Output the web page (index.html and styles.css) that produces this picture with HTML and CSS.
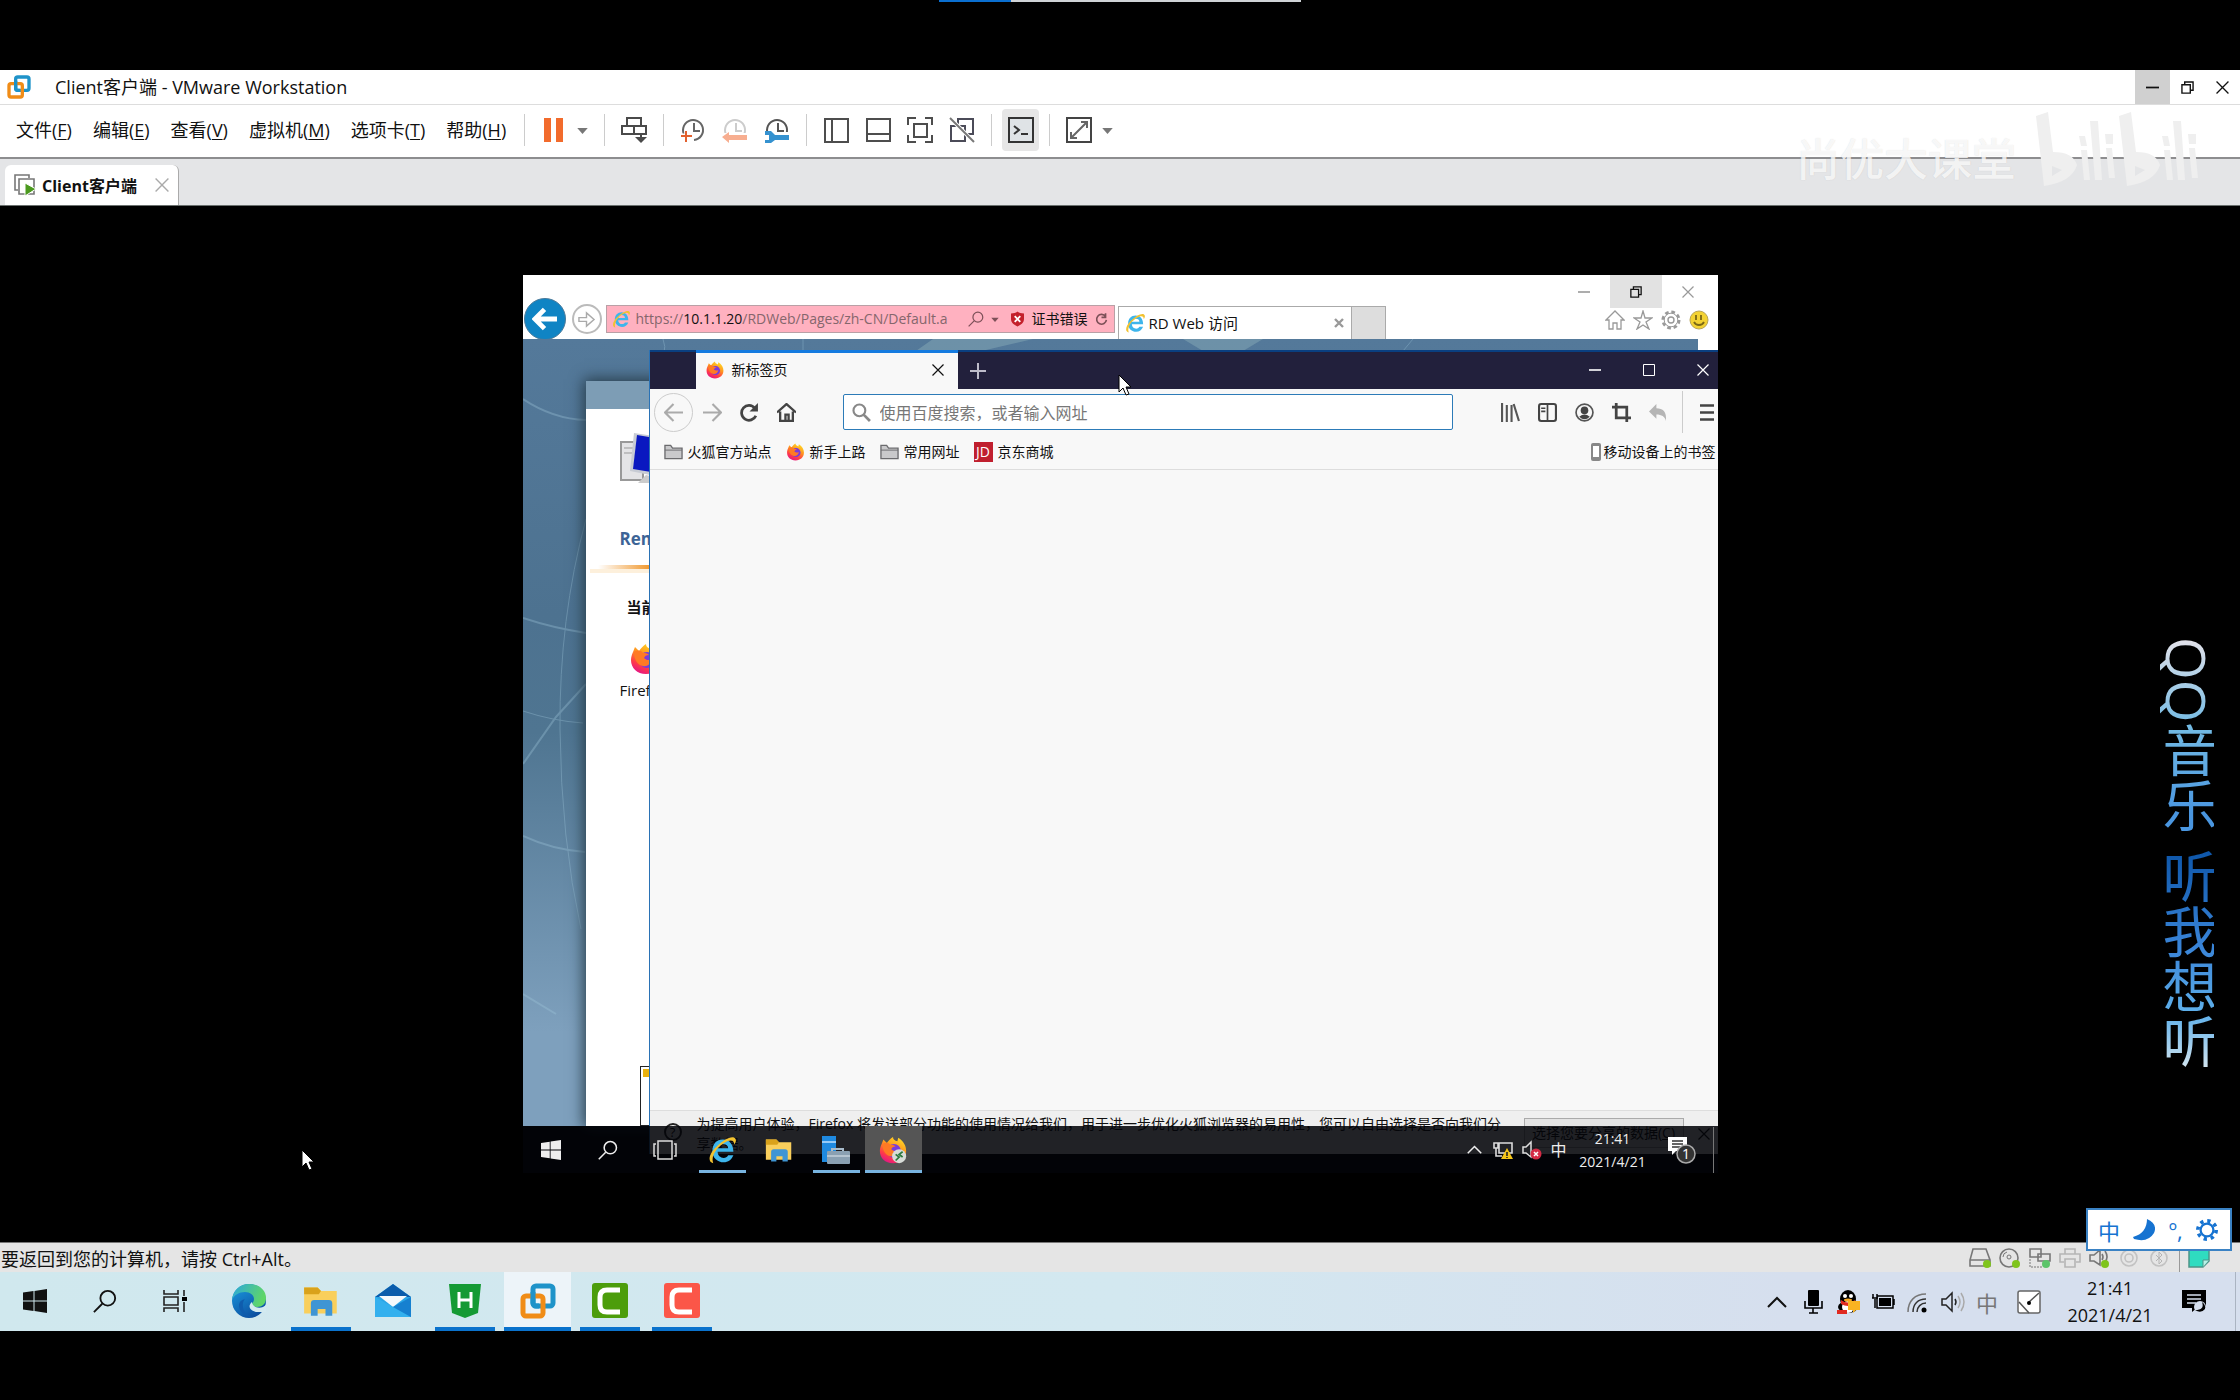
FILE: index.html
```html
<!DOCTYPE html>
<html lang="zh-CN">
<head>
    <meta charset="UTF-8">
    <meta name="viewport" content="width=device-width, initial-scale=1.0">
    <title>Client客户端 - VMware Workstation</title>
    <link rel="stylesheet" href="styles.css">
</head>
<body>
    <!-- shared icons -->
    <svg class="sprite" aria-hidden="true">
        <defs>
            <linearGradient id="foxFlame" x1="0.8" y1="0" x2="0.3" y2="1">
                <stop offset="0" stop-color="#ffe226"/>
                <stop offset="0.4" stop-color="#ff9a1f"/>
                <stop offset="0.75" stop-color="#ff3b47"/>
                <stop offset="1" stop-color="#e31587"/>
            </linearGradient>
            <linearGradient id="edgeBlue" x1="0" y1="0" x2="0.6" y2="1">
                <stop offset="0" stop-color="#1b9de2"/>
                <stop offset="1" stop-color="#0c4fa0"/>
            </linearGradient>
            <linearGradient id="edgeGreen" x1="0" y1="0" x2="1" y2="0.3">
                <stop offset="0" stop-color="#2aa7df"/>
                <stop offset="1" stop-color="#5fd668"/>
            </linearGradient>
        </defs>
        <symbol id="firefox" viewBox="0 0 32 32">
            <path d="M3 9 5 4l4 4c2-3 4-5 7-7 0 3 2 4 5 5l1-4c6 4 9 9 9 15 0 8-6 14-15 14S1 25 1 17c0-3 1-6 2-8z" fill="url(#foxFlame)"/>
            <circle cx="17" cy="17" r="8" fill="#7a3bdc"/>
            <path d="M4 9c3-2 7-2 9 1 2 0 4 0 6 2-3 0-4 1-5 3 2 2 5 3 8 1-1 5-5 8-9 7-6-1-9-7-9-14z" fill="#ff7a24"/>
        </symbol>
        <symbol id="ie" viewBox="0 0 32 32">
            <path d="M29 18H11c0 4 3 7 7 7 2 0 4-1 5-3h6c-2 5-6 8-11 8C11 30 5 25 5 17S10 4 17 4s12 5 12 14zM11 14h12c0-3-2-5-6-5-3 0-6 2-6 5z" fill="#3db5ec" fill-rule="evenodd"/>
            <path d="M6 31c-7-1-5-11 4-19C17 5 26 0 30 2c3 2 2 5 0 8 0-3-1-5-4-5-4 0-10 4-15 9-5 6-7 12-5 17z" fill="#f2c230"/>
        </symbol>
        <symbol id="folder" viewBox="0 0 20 18">
            <path d="M1 16V2h6l2 3h10v11z" fill="#c9c9cb" stroke="#6b6b6e" stroke-width="1.4"/>
            <path d="M1 7h18" stroke="#6b6b6e"/>
        </symbol>
        <symbol id="explorer" viewBox="0 0 32 32">
            <path d="M1 4h12l3 3h14v20H1z" fill="#f9cf5c"/>
            <path d="M1 4h12l3 3-2 3H1z" fill="#d9a21b"/>
            <path d="M7 29V18a3 3 0 0 1 3-3h13a3 3 0 0 1 3 3v11h-6v-6h-7v6z" fill="#3f95d4"/>
        </symbol>
        <symbol id="winlogo" viewBox="0 0 24 24">
            <path d="M0 3.5 10.5 2v9.5H0zM11.5 1.9 24 0v11.5H11.5zM0 12.5h10.5V22L0 20.5zM11.5 12.5H24V24l-12.5-1.9z" fill="currentColor"/>
        </symbol>
        <symbol id="vmware" viewBox="0 0 36 36">
            <rect x="13" y="3" width="20" height="20" rx="3" fill="none" stroke="#1f93c9" stroke-width="5"/>
            <rect x="3" y="13" width="20" height="20" rx="3" fill="none" stroke="#f08c17" stroke-width="5"/>
            <path d="M13 9v11a3 3 0 0 0 3 3h3" fill="none" stroke="#1f93c9" stroke-width="5"/>
        </symbol>
        <symbol id="search" viewBox="0 0 26 26">
            <circle cx="16" cy="10" r="8" fill="none" stroke="currentColor" stroke-width="2"/>
            <path d="M10 16 1 25" stroke="currentColor" stroke-width="2"/>
        </symbol>
        <symbol id="close" viewBox="0 0 12 12">
            <path d="m.5.5 11 11m0-11-11 11" stroke="currentColor" stroke-width="1.2"/>
        </symbol>
        <symbol id="minus" viewBox="0 0 12 12">
            <path d="M0 6h12" stroke="currentColor" stroke-width="1.6"/>
        </symbol>
        <symbol id="restore" viewBox="0 0 14 14">
            <path d="M1 4h9v9H1zM4 4V1h9v9h-3" fill="none" stroke="currentColor" stroke-width="1.5"/>
        </symbol>
        <symbol id="clock" viewBox="0 0 26 26">
            <path d="M5 19a10 10 0 1 1 9 4M14 6v8h6" fill="none" stroke="currentColor" stroke-width="2"/>
        </symbol>
        <symbol id="caret" viewBox="0 0 12 8">
            <path d="M0 1h12L6 8z" fill="currentColor"/>
        </symbol>
        <symbol id="chevron" viewBox="0 0 20 12">
            <path d="m1 11 9-9 9 9" fill="none" stroke="currentColor" stroke-width="2"/>
        </symbol>
        <symbol id="pointer" viewBox="0 0 14 22">
            <path d="M1 1v17l4-4 3 7 3-1-3-7h5z" fill="#fff" stroke="#000"/>
        </symbol>
    </svg>

    <div class="letterbox top"><div class="player-progress"><span class="played"></span></div></div>

    <div class="workstation">
        <header class="titlebar">
            <svg class="logo"><use href="#vmware"/></svg>
            <h1>Client客户端 - VMware Workstation</h1>
            <div class="window-controls">
                <button class="hovered" aria-label="最小化"><svg class="ctl"><use href="#minus"/></svg></button>
                <button aria-label="还原"><svg class="ctl"><use href="#restore"/></svg></button>
                <button aria-label="关闭"><svg class="ctl"><use href="#close"/></svg></button>
            </div>
        </header>

        <nav class="toolbar">
            <div class="menu">
                <button>文件(<u>F</u>)</button>
                <button>编辑(<u>E</u>)</button>
                <button>查看(<u>V</u>)</button>
                <button>虚拟机(<u>M</u>)</button>
                <button>选项卡(<u>T</u>)</button>
                <button>帮助(<u>H</u>)</button>
            </div>
            <div class="tools with-caret">
                <button aria-label="挂起"><svg viewBox="0 0 26 26"><path d="M3 1h7v24H3zM15 1h7v24h-7z" fill="#f26b2c"/></svg></button>
                <button class="drop" aria-label="电源选项"><svg><use href="#caret"/></svg></button>
            </div>
            <div class="tools">
                <button aria-label="发送按键"><svg viewBox="0 0 26 26"><path d="M6 1h14v8H6zM1 9h12v8H1zM13 9h12v8H13zM20 17v6" fill="none" stroke="#4a4a4a" stroke-width="2"/><path d="M14 20h12l-6 6z" fill="#4a4a4a"/></svg></button>
            </div>
            <div class="tools">
                <button aria-label="拍摄快照"><svg viewBox="0 0 26 26" color="#666"><use href="#clock"/><path d="M1 19h12M7 13v12" stroke="#fff" stroke-width="5"/><path d="M1 19h11M6 14v11" stroke="#e2612f" stroke-width="2"/></svg></button>
                <button aria-label="恢复快照"><svg viewBox="0 0 26 26" color="#ccc"><use href="#clock"/><path d="M0 16h26v10H0z" fill="#fff"/><path d="M0 20l7-5v3h18v5H7v3z" fill="#f7ae90"/></svg></button>
                <button aria-label="管理快照"><svg viewBox="0 0 26 26" color="#555"><use href="#clock"/><path d="M0 15h26v11H0z" fill="#fff"/><path d="M1 14h6l4 4h14v5H11l-4 3H1v-3h4v-5H1z" fill="#3592d0"/></svg></button>
            </div>
            <div class="tools">
                <button aria-label="库"><svg viewBox="0 0 26 26"><path d="M2 2h23v23H2zM9 2v23" fill="none" stroke="#4d4d4d" stroke-width="2"/></svg></button>
                <button aria-label="缩略图"><svg viewBox="0 0 26 26"><path d="M2 2h23v22H2zM2 17h23" fill="none" stroke="#4d4d4d" stroke-width="2"/></svg></button>
                <button aria-label="全屏"><svg viewBox="0 0 26 26"><path d="M1 8V1h8M18 1h7v7M25 18v7h-7M9 25H1v-7M7 7h13v13H7z" fill="none" stroke="#4d4d4d" stroke-width="2"/></svg></button>
                <button aria-label="Unity"><svg viewBox="0 0 26 26"><path d="M9 9V2h15v15h-7M2 9h14v15H2z" fill="none" stroke="#4b4b58" stroke-width="2"/><path d="m1 1 24 24" stroke="#fff" stroke-width="4"/><path d="m1 1 24 24" stroke="#777" stroke-width="2"/></svg></button>
            </div>
            <div class="tools console">
                <button class="pressed" aria-label="控制台视图"><svg viewBox="0 0 26 26"><path d="M1 1h24v24H1z" fill="#dfe3e6" stroke="#333" stroke-width="2"/><path d="m6 9 5 4-5 4M13 17h7" fill="none" stroke="#333" stroke-width="2"/></svg></button>
            </div>
            <div class="tools with-caret">
                <button aria-label="自由拉伸"><svg viewBox="0 0 26 26"><path d="M1 1h24v24H1z" fill="none" stroke="#444" stroke-width="2"/><path d="m6 20 14-14M15 5h6v6M5 15v6h6" fill="none" stroke="#666" stroke-width="2"/></svg></button>
                <button class="drop" aria-label="拉伸选项"><svg><use href="#caret"/></svg></button>
            </div>
        </nav>

        <div class="tabstrip">
            <div class="vm-tab">
                <svg class="vm-tab-icon" viewBox="0 0 22 22"><path d="M4 16H1V1h14v3M5 5h15v15H5z" fill="none" stroke="#777" stroke-width="1.6"/><path d="m11 9 11 6-11 7z" fill="#4c9a1f" stroke="#fff"/></svg>
                <span>Client客户端</span>
                <button aria-label="关闭选项卡"><svg><use href="#close"/></svg></button>
            </div>
        </div>

        <main class="stage">
            <div class="guest">
                <!-- Internet Explorer -->
                <section class="ie">
                    <div class="ie-head">
                        <div class="ie-nav">
                            <button class="ie-back" aria-label="后退"><svg viewBox="0 0 26 24"><path d="M13 2 3 12l10 10M4 12h22" fill="none" stroke="#fff" stroke-width="5"/></svg></button>
                            <button class="ie-forward" aria-label="前进"><svg viewBox="0 0 20 18"><path d="M2 7h8V2l8 7-8 7v-5H2z" fill="none" stroke="#aaa" stroke-width="1.5"/></svg></button>
                            <div class="ie-address">
                                <svg class="ico18"><use href="#ie"/></svg>
                                <a class="url" href="#">https://<b>10.1.1.20</b>/RDWeb/Pages/zh-CN/Default.a</a>
                                <svg class="ico16 grey"><use href="#search"/></svg>
                                <svg class="tiny grey"><use href="#caret"/></svg>
                                <svg class="shield" viewBox="0 0 14 16"><path d="M7 0c2 2 4 2 7 2v6c0 4-3 6-7 8-4-2-7-4-7-8V2c3 0 5 0 7-2z" fill="#c4202c"/><path d="m4 5 6 6m0-6-6 6" stroke="#fff" stroke-width="2"/></svg>
                                <span class="cert">证书错误</span>
                                <button aria-label="刷新"><svg class="reload" viewBox="0 0 16 16"><path d="M13 5A6 6 0 1 0 14 9M13 1v5H8" fill="none" stroke="#7d5058" stroke-width="2"/></svg></button>
                            </div>
                            <div class="ie-tab">
                                <svg class="ico20"><use href="#ie"/></svg>
                                <span>RD Web 访问</span>
                                <button aria-label="关闭标签"><svg viewBox="0 0 10 10"><path d="m1 1 8 8m0-8L1 9" stroke="#999" stroke-width="2.4"/></svg></button>
                            </div>
                            <button class="ie-newtab" aria-label="新建标签"></button>
                        </div>
                        <div class="ie-side">
                            <div class="ie-controls">
                                <button aria-label="最小化"><svg class="ctl"><use href="#minus"/></svg></button>
                                <button class="hovered" aria-label="还原"><svg class="ctl"><use href="#restore"/></svg></button>
                                <button aria-label="关闭"><svg class="ctl"><use href="#close"/></svg></button>
                            </div>
                            <div class="ie-icons">
                                <svg viewBox="0 0 20 20"><path d="M1 10 10 1l9 9h-3v9h-4v-6H8v6H4v-9z" fill="none" stroke="#999" stroke-width="1.3"/></svg>
                                <svg viewBox="0 0 20 20"><path d="m10 1 2 7h7l-6 4 3 7-6-4-6 4 3-7-6-4h7z" fill="none" stroke="#999" stroke-width="1.3"/></svg>
                                <svg viewBox="0 0 20 20"><circle cx="10" cy="10" r="8" fill="none" stroke="#999" stroke-width="3" stroke-dasharray="3.6 2.7"/><circle cx="10" cy="10" r="6.8" fill="#fff" stroke="#999"/><circle cx="10" cy="10" r="3" fill="none" stroke="#999" stroke-width="1.4"/></svg>
                                <svg viewBox="0 0 20 20"><circle cx="10" cy="10" r="9" fill="#f3d232" stroke="#b8a455"/><path d="M7 5v5M12 5v5M5 12c2 4 8 4 10 0" fill="none" stroke="#7a6714" stroke-width="1.8"/></svg>
                            </div>
                        </div>
                    </div>
                    <div class="ie-page">
                        <svg class="page-bg" viewBox="0 0 1175 787" preserveAspectRatio="none">
                            <g fill="none" stroke="#9fc6da" stroke-width="2" opacity="0.35">
                                <path d="M0 60Q30 80 63 81M0 279q30 10 63 15M63 345 33 378 0 425M0 497q30 14 62 16M0 655l33 20"/>
                                <path d="M63 180Q36 280 37 390T58 590M0 372q30 10 60 12M140 0q3 8 1 14M280 0v12M880 12 890 0" stroke-width="1"/>
                            </g>
                            <path d="m390 14 20-14h100l-60 14zM660 0h80l-20 12h-40z" fill="#86a9b5" opacity="0.5"/>
                        </svg>
                        <div class="rdweb">
                            <div class="rdweb-head"></div>
                            <svg class="rd-computers" viewBox="0 0 64 50"><path d="M1 9h22v38H1z" fill="#e4e4e6" stroke="#999" stroke-width="2"/><path d="M4 15h16M4 20h16" stroke="#999"/><path d="m14 0 40 6-4 40-40-8z" fill="#c8ccd4"/><path d="m17 2 36 6-4 34-36-6z" fill="#0a18c0"/><path d="M26 42 18 50h40z" fill="#ccc"/></svg>
                            <h2>RemoteApp</h2>
                            <div class="rd-rule"></div>
                            <h3>当前文件夹</h3>
                            <a class="rd-app" href="#"><svg><use href="#firefox"/></svg>Firefox</a>
                            <div class="rd-note"><span></span></div>
                        </div>
                    </div>
                </section>

                <!-- Firefox -->
                <section class="firefox">
                    <div class="ff-tabs">
                        <div class="ff-tab">
                            <svg class="ico18"><use href="#firefox"/></svg>
                            <span>新标签页</span>
                            <button aria-label="关闭标签页"><svg class="ctl"><use href="#close"/></svg></button>
                        </div>
                        <button class="ff-plus" aria-label="打开新标签页"><svg viewBox="0 0 16 16"><path d="M8 0v16M0 8h16" stroke="#bdbcca" stroke-width="2"/></svg></button>
                        <div class="ff-controls">
                            <button aria-label="最小化"><svg class="ctl"><use href="#minus"/></svg></button>
                            <button aria-label="最大化"><svg class="ctl" viewBox="0 0 12 12"><path d="M.5.5h11v11H.5z" fill="none" stroke="#fff"/></svg></button>
                            <button aria-label="关闭"><svg class="ctl"><use href="#close"/></svg></button>
                        </div>
                    </div>
                    <div class="ff-nav">
                        <button class="ff-back" aria-label="后退"><svg viewBox="0 0 18 18"><path d="M9 1 1 9l8 8M1 9h17" fill="none" stroke="#aaa" stroke-width="2"/></svg></button>
                        <button aria-label="前进"><svg viewBox="0 0 18 18"><path d="m9 1 8 8-8 8M17 9H0" fill="none" stroke="#aaa" stroke-width="2"/></svg></button>
                        <button aria-label="刷新"><svg viewBox="0 0 18 18"><path d="M14 5A7 7 0 1 0 15 12" fill="none" stroke="#444" stroke-width="2.6"/><path d="M17 0v8H9z" fill="#444"/></svg></button>
                        <button aria-label="主页"><svg viewBox="0 0 18 18"><path d="m0 9 9-8 9 8M3 8v9h12V8M8 17v-6h3v6" fill="none" stroke="#444" stroke-width="2.2"/></svg></button>
                        <label class="ff-url">
                            <svg viewBox="0 0 18 18"><circle cx="7" cy="7" r="5.6" fill="none" stroke="#888" stroke-width="2"/><path d="m11 11 6 6" stroke="#888" stroke-width="2.6"/></svg>
                            <input type="text" placeholder="使用百度搜索，或者输入网址" aria-label="地址栏">
                        </label>
                        <div class="ff-actions">
                            <button aria-label="书库"><svg viewBox="0 0 18 18"><path d="M1 0v18M5.500 2v16M10 2v16M12 1l5 16" stroke="#555" stroke-width="2"/></svg></button>
                            <button aria-label="侧栏"><svg viewBox="0 0 18 18"><rect x="1" y="1" width="16" height="16" rx="2" fill="none" stroke="#444" stroke-width="2"/><path d="M9 1v16M3 5h4M3 8h4" stroke="#444" stroke-width="1.6"/></svg></button>
                            <button aria-label="账户"><svg viewBox="0 0 18 18"><circle cx="9" cy="9" r="8" fill="none" stroke="#555" stroke-width="1.6"/><circle cx="9" cy="7" r="3.600" fill="#444"/><path d="M4 13q5-4 10 0-5 5-10 0z" fill="#444"/></svg></button>
                            <button aria-label="截图"><svg viewBox="0 0 18 18"><path d="M0 4h14v14M4 0v14h14" fill="none" stroke="#444" stroke-width="2.6"/></svg></button>
                            <button aria-label="撤销"><svg viewBox="0 0 18 18"><path d="M7 1v4c6 0 10 3 9 12-1-4-4-6-9-6v4L0 8z" fill="#b5b5b5"/></svg></button>
                            <button class="ff-menu" aria-label="菜单"><svg viewBox="0 0 14 18"><path d="M0 2h14M0 9h14M0 16h14" stroke="#444" stroke-width="2.4"/></svg></button>
                        </div>
                    </div>
                    <div class="ff-bookmarks">
                        <a href="#"><svg><use href="#folder"/></svg>火狐官方站点</a>
                        <a href="#"><svg><use href="#firefox"/></svg>新手上路</a>
                        <a href="#"><svg><use href="#folder"/></svg>常用网址</a>
                        <a href="#"><span class="jd">JD</span>京东商城</a>
                        <a class="mobile" href="#"><svg viewBox="0 0 12 20"><rect x="1" y="1" width="10" height="18" rx="2" fill="#888"/><path d="M3 4h6v11H3z" fill="#fff"/></svg>移动设备上的书签</a>
                    </div>
                    <div class="ff-page"></div>
                    <div class="ff-notice">
                        <span class="help">?</span>
                        <p>为提高用户体验，Firefox 将发送部分功能的使用情况给我们，用于进一步优化火狐浏览器的易用性，您可以自由选择是否向我们分享数据。</p>
                        <button class="choose">选择您要分享的数据(<u>C</u>)</button>
                        <button class="dismiss" aria-label="关闭"><svg class="ctl"><use href="#close"/></svg></button>
                    </div>
                </section>

                <!-- guest taskbar -->
                <footer class="guest-taskbar">
                    <button aria-label="开始"><svg class="ico20"><use href="#winlogo"/></svg></button>
                    <button aria-label="搜索"><svg class="ico20"><use href="#search"/></svg></button>
                    <button aria-label="任务视图"><svg class="ico24" viewBox="0 0 24 20"><path d="M5 1h14v18H5zM3 4H1v12h2M21 4h2v12h-2" fill="none" stroke="#ddd" stroke-width="1.5"/></svg></button>
                    <button class="open" aria-label="Internet Explorer"><svg class="ico28"><use href="#ie"/></svg></button>
                    <button aria-label="文件资源管理器"><svg class="ico28"><use href="#explorer"/></svg></button>
                    <button class="open" aria-label="服务器管理器"><svg class="ico28" viewBox="0 0 28 28"><path d="M0 0h14v26H0z" fill="#1f8ae0"/><path d="M0 6h14" stroke="#bfe0ff" stroke-width="1.5"/><path d="M10 16V13h11v3" fill="none" stroke="#a9bccb" stroke-width="2"/><rect x="5" y="15" width="23" height="13" rx="1" fill="#8aa0b2"/><path d="M5 20h23" stroke="#e0e8ef"/></svg></button>
                    <button class="open current" aria-label="Firefox"><svg class="ico28" viewBox="0 0 32 32"><use href="#firefox"/><circle cx="23" cy="23" r="8" fill="#d8dcd8"/><path d="m19 21 4 3-4 4M27 18l-4 3 4 3" fill="none" stroke="#2c7a3e" stroke-width="2"/></svg></button>
                    <div class="guest-tray">
                        <svg class="chev"><use href="#chevron"/></svg>
                        <svg class="ico20" viewBox="0 0 20 20"><path d="M6 3h13v10H6zM1 3h4v5H1zM3 8v8h6" fill="none" stroke="#ddd" stroke-width="1.6"/><path d="m14 8 6 11H8z" fill="#f5c518"/><path d="M14 12v4M14 17v1" stroke="#222" stroke-width="1.6"/></svg>
                        <svg class="ico20" viewBox="0 0 20 20"><path d="M1 7h3l5-5v15l-5-4H1z" fill="none" stroke="#ddd" stroke-width="1.500"/><circle cx="14" cy="14" r="5.500" fill="#d52b45"/><path d="m12 12 4 4m0-4-4 4" stroke="#fff" stroke-width="1.500"/></svg>
                        <span class="ime">中</span>
                        <time>21:41<br>2021/4/21</time>
                        <svg class="ico28" viewBox="0 0 28 28"><path d="M0 1h19v14H8l-4 4v-4H0z" fill="#fff"/><path d="M4 5h11M4 8h11M4 11h8" stroke="#333" stroke-width="1.500"/><circle cx="18" cy="18" r="9" fill="#333" stroke="#aaa" stroke-width="1.500"/><text x="18" y="23" text-anchor="middle" class="badge-count">1</text></svg>
                        <span class="peek"></span>
                    </div>
                </footer>
                <svg class="pointer guest-pointer"><use href="#pointer"/></svg>
            </div>
        </main>

        <div class="statusbar">
            <span>要返回到您的计算机，请按 Ctrl+Alt。</span>
            <div class="devices">
                <svg viewBox="0 0 22 20"><path d="M4 1h13l4 11v6H1v-6zM1 12h20" fill="none" stroke="#777" stroke-width="1.600"/><circle cx="18" cy="16" r="4" fill="#7fc41c"/></svg>
                <svg viewBox="0 0 22 20"><circle cx="10" cy="10" r="9" fill="none" stroke="#777" stroke-width="1.600"/><circle cx="10" cy="9" r="2" fill="none" stroke="#777"/><path d="M4 9q0-4 4-5" fill="none" stroke="#777"/><circle cx="17" cy="16" r="4" fill="#7fc41c"/></svg>
                <svg viewBox="0 0 22 20"><path d="M1 1h11v8H1zM9 6h12v7H9z" fill="#e5e5e5" stroke="#777" stroke-width="1.600"/><path d="M1 11v8h13" fill="none" stroke="#777" stroke-dasharray="2 1"/><circle cx="17" cy="16" r="4" fill="#5cc46a"/></svg>
                <svg viewBox="0 0 22 20"><path d="M6 6V1h10v5M5 14H1V6h20v8h-4M6 11h10v8H6z" fill="none" stroke="#b5b5b5" stroke-width="1.600"/></svg>
                <svg viewBox="0 0 22 20"><path d="M1 7h4l6-5v15l-6-4H1zM13 6q2 3 0 6M16 3q4 6 0 11" fill="none" stroke="#777" stroke-width="1.600"/><circle cx="16" cy="16" r="4" fill="#7fc41c"/></svg>
                <svg viewBox="0 0 22 20"><circle cx="10" cy="10" r="8" fill="none" stroke="#c2c2c2" stroke-width="1.600"/><circle cx="10" cy="10" r="4" fill="none" stroke="#c2c2c2" stroke-width="1.600"/></svg>
                <svg viewBox="0 0 22 20"><circle cx="10" cy="10" r="8" fill="none" stroke="#c2c2c2" stroke-width="1.600"/><path d="m7 7 6 6-3 3V4l3 3-6 6" fill="none" stroke="#b5b5b5"/></svg>
                <i></i>
                <svg viewBox="0 0 22 20"><path d="M1 0h20v13l-6 6H1z" fill="#2fdcc0" stroke="#4d9488" stroke-width="1.500"/><path d="M21 12h-6v7" fill="#b8f2e7" stroke="#4d9488"/></svg>
            </div>
        </div>
    </div>

    <footer class="taskbar">
        <button aria-label="开始"><svg class="ico24"><use href="#winlogo"/></svg></button>
        <button aria-label="搜索"><svg class="ico24"><use href="#search"/></svg></button>
        <button class="task-view" aria-label="任务视图"><svg class="ico24" viewBox="0 0 24 24"><path d="M1 1v4h14V1M1 23v-4h14v4M1 8h14v8H1zM21 1v6M21 13v10" fill="none" stroke="#222" stroke-width="1.600"/><path d="M19 8h5v4h-5z"/></svg></button>
        <button aria-label="Edge"><svg class="ico36" viewBox="0 0 36 36"><circle cx="18" cy="18" r="17" fill="url(#edgeBlue)"/><path d="M1 17C2 7 9 1 18 1c10 0 17 6 17 14 0 6-4 9-9 9-3 0-5-1-5-3 0-1 2-2 2-5 0-4-4-7-9-7-6 0-11 3-13 8z" fill="url(#edgeGreen)"/><path d="M14 16c-4 4-3 16 8 18-9 0-14-6-14-12 0-3 2-5 6-6z" fill="#0f5cad"/><path d="M21 19c0 4 5 7 11 5l3-2v7h-6c-8 1-14-5-8-10z" fill="#d3eaf0"/></svg></button>
        <button class="open" aria-label="文件资源管理器"><svg class="ico36"><use href="#explorer"/></svg></button>
        <button aria-label="邮件"><svg class="ico36" viewBox="0 0 36 36"><path d="M0 14 18 1l18 13v20H0z" fill="#2aa5e6"/><path d="M0 14 18 1l18 13z" fill="#0b5cab"/><path d="M4 13h28L18 24z" fill="#f5f9fc"/><path d="m0 14 36 20H0z" fill="#33b0ee"/><path d="m18 24 18 10V14z" fill="#1680d0"/></svg></button>
        <button class="open" aria-label="HBuilder"><svg class="ico36" viewBox="0 0 36 36"><path d="M2 1h32l-3 29-13 5-13-5z" fill="#159a34"/><path d="M12 9v16M24 9v16M12 17h12" stroke="#fff" stroke-width="3"/></svg></button>
        <button class="open current" aria-label="VMware Workstation"><svg class="ico36"><use href="#vmware"/></svg></button>
        <button class="open" aria-label="Camtasia"><svg class="ico36" viewBox="0 0 36 36"><rect width="36" height="35" rx="3" fill="#4c9d0b"/><path d="M28 7H15q-7 0-7 7v8q0 7 7 7h13" fill="none" stroke="#fff" stroke-width="5"/></svg></button>
        <button class="open" aria-label="Camtasia 录制器"><svg class="ico36" viewBox="0 0 36 36"><rect width="36" height="35" rx="3" fill="#fb5648"/><path d="M28 7H15q-7 0-7 7v8q0 7 7 7h13" fill="none" stroke="#fff" stroke-width="5"/></svg></button>
        <div class="tray">
            <svg class="chev"><use href="#chevron"/></svg>
            <svg viewBox="0 0 24 24"><rect x="7" y="0" width="11" height="16" rx="1"/><path d="M4 11v7h17v-7M12 18v5M8 23h9" fill="none" stroke="#000" stroke-width="1.600"/></svg>
            <svg viewBox="0 0 24 24"><ellipse cx="12" cy="9" rx="8" ry="9"/><ellipse cx="12" cy="17" rx="10" ry="6"/><ellipse cx="12" cy="17" rx="6" ry="6" fill="#fff"/><path d="M5 10q7 5 14 0v4q-7 4-14 0z" fill="#e02a20"/><circle cx="9" cy="6" r="2" fill="#fff"/><circle cx="15" cy="6" r="2" fill="#fff"/><ellipse cx="12" cy="10" rx="4" ry="1.500" fill="#f5a623"/><path d="M1 20h10v4H1z" fill="#e02a20"/><path d="M12 11h12v9h-4l-3 3v-3h-5z" fill="#f9b322"/></svg>
            <svg viewBox="0 0 24 24"><path d="M8 8h12v8H8z"/><path d="M6 6h16v12H6zM23 9v6M1 8h6M2 4v4M6 4v4M4 9v9" fill="none" stroke="#000" stroke-width="1.500"/></svg>
            <svg viewBox="0 0 24 24"><g fill="none" stroke="#777" stroke-width="1.500"><path d="M2 22C2 11 9 4 20 4"/><path d="M7 22c0-8 5-13 13-13M11 22c0-5 4-9 9-9" stroke="#333"/></g><circle cx="18" cy="20" r="2.500"/></svg>
            <svg viewBox="0 0 24 24"><path d="M1 9h4l6-6v18l-6-6H1zM14 9q2 3 0 6" fill="none" stroke="#222" stroke-width="1.500"/><path d="M17 6q4 6 0 12M20 3q6 9 0 18" fill="none" stroke="#aaa" stroke-width="1.500"/></svg>
            <span class="ime">中</span>
            <svg viewBox="0 0 24 24"><rect x="1" y="1" width="22" height="22" rx="2" fill="#fff" stroke="#666" stroke-width="1.500"/><path d="m2 12 10 11M12 12l10-9" stroke="#555" stroke-width="1.500"/><circle cx="12" cy="13" r="2"/></svg>
            <time>21:41<br>2021/4/21</time>
            <svg viewBox="0 0 24 24"><path d="M0 0h24v18h-9l-5 4v-4H0z"/><path d="M5 5h14M5 9h14M5 13h9" stroke="#d6dfee" stroke-width="1.600"/><circle cx="18" cy="17" r="6" fill="#d6dfee"/><path d="M20 12q3 8-7 8 6 4 10-1 1-4-3-7z"/></svg>
            <span class="peek"></span>
        </div>
    </footer>
    <div class="letterbox bottom"></div>

    <!-- floating layers -->
    <svg class="pointer host-pointer"><use href="#pointer"/></svg>

    <div class="watermark">
        <span>尚优大课堂</span>
        <svg viewBox="0 0 166 74"><path d="M0 4 12 0l5 40q20 0 24 13Q36 70 8 74zM16 54v10l10-6zM83 4 95 0l5 40q20 0 24 13-5 17-33 21zM99 54v10l10-6zM43 24h6l2 10h-6zM45 38h6l3 30h-6zM54 9h8l4 59h-7zM69 22h8v10h-7zM70 36h6l3 30h-6zM126 24h6l2 10h-6zM128 38h6l3 30h-6zM137 9h8l4 59h-7zM152 22h8v10h-7zM153 36h6l3 30h-6z" fill="#efefef" fill-rule="evenodd"/></svg>
    </div>

    <div class="lyrics"><span class="line-a">QQ音乐</span><span class="line-b">听我想听</span></div>

    <div class="ime-bar">
        <button>中</button>
        <button aria-label="半角"><svg viewBox="0 0 22 22"><path d="M14 0q11 5 7 14-6 10-20 6l-1-2Q14 14 14 0z" fill="#1673d1"/></svg></button>
        <button>º,</button>
        <button aria-label="设置"><svg viewBox="0 0 24 24"><circle cx="12" cy="12" r="10" fill="none" stroke="#1673d1" stroke-width="4" stroke-dasharray="3.600 4.250"/><circle cx="12" cy="12" r="7" fill="#fff" stroke="#1673d1" stroke-width="2.500"/></svg></button>
    </div>
</body>
</html>
```
FILE: styles.css
```css
* {
    margin: 0;
    padding: 0;
    box-sizing: border-box;
}

body {
    position: relative;
    display: flex;
    flex-direction: column;
    min-height: 100vh;
    background: #000;
    color: #111;
    font-family: "Open Sans", "Noto Sans CJK SC", sans-serif;
    font-size: 18px;
    overflow: hidden;
}

button {
    display: flex;
    align-items: center;
    justify-content: center;
    border: 0;
    background: none;
    color: inherit;
    font: inherit;
    white-space: nowrap;
}

a {
    color: inherit;
    text-decoration: none;
}

svg {
    display: block;
    flex: none;
}

.sprite {
    position: absolute;
    width: 0;
    height: 0;
}

.ico16 { width: 16px; height: 16px; }
.ico18 { width: 18px; height: 18px; }
.ico20 { width: 20px; height: 20px; }
.ico24 { width: 24px; height: 24px; }
.ico28 { width: 28px; height: 28px; }
.ico36 { width: 36px; height: 36px; }
.ctl { width: 12px; height: 12px; }

.letterbox.top {
    height: 70px;
}

.letterbox.bottom {
    height: 69px;
}

.player-progress {
    width: 362px;
    height: 2px;
    margin: 0 auto;
    background: #cfd3d6;
}

.played {
    display: block;
    width: 20%;
    height: 2px;
    background: #0a6fd0;
}

/* VMware window */
.workstation {
    flex: 1;
    display: flex;
    flex-direction: column;
}

.titlebar {
    display: flex;
    align-items: center;
    height: 35px;
    padding-left: 7px;
    background: #fff;
    border-bottom: 1px solid #ddd;
}

.logo {
    width: 24px;
    height: 24px;
    margin-right: 24px;
}

.titlebar h1 {
    font-size: 18px;
    font-weight: 400;
    line-height: 24px;
}

.window-controls {
    display: flex;
    margin-left: auto;
    height: 34px;
}

.window-controls button {
    width: 35px;
}

.window-controls .ctl {
    width: 13px;
    height: 13px;
}

.window-controls .hovered {
    background: #d0d0d0;
}

.toolbar {
    display: flex;
    align-items: center;
    height: 54px;
    padding: 0 0 2px 16px;
    background: #fff;
    border-bottom: 2px solid #8d8d8f;
}

.menu {
    display: flex;
    gap: 21px;
    margin-right: 18px;
    line-height: 24px;
}

.menu u {
    text-underline-offset: 2px;
    text-decoration-thickness: 1px;
}

.tools {
    display: flex;
    align-items: center;
    gap: 16px;
    height: 32px;
    padding: 0 16px;
    border-left: 1px solid #ccc;
}

.tools.with-caret {
    gap: 10px;
}

.tools.console {
    padding: 0 10px;
}

.tools svg {
    width: 26px;
    height: 26px;
}

.tools .drop svg {
    width: 11px;
    height: 7px;
    color: #777;
}

.pressed {
    width: 37px;
    height: 42px;
    background: #e6e6e6;
    border-radius: 4px;
}

.tabstrip {
    display: flex;
    align-items: flex-end;
    height: 47px;
    padding-left: 5px;
    background: #e4e5e7;
    border-bottom: 1px solid #6a706e;
}

.vm-tab {
    display: flex;
    align-items: center;
    height: 40px;
    padding: 0 9px;
    background: #fff;
    border-right: 1px solid #aaa;
    border-radius: 6px 6px 0 0;
    font-size: 16px;
    font-weight: 700;
}

.vm-tab-icon {
    width: 22px;
    height: 22px;
    margin-right: 6px;
}

.vm-tab button {
    margin-left: 18px;
    color: #aaa;
}

.vm-tab button svg {
    width: 14px;
    height: 14px;
}

.stage {
    flex: 1;
    display: flex;
    align-items: center;
    justify-content: center;
}

.statusbar {
    display: flex;
    align-items: center;
    justify-content: space-between;
    height: 30px;
    padding: 0 30px 0 1px;
    background: #e5e5e5;
    border-top: 1px solid #777;
}

.devices {
    display: flex;
    align-items: center;
    gap: 8px;
}

.devices svg {
    width: 22px;
    height: 20px;
}

.devices i {
    width: 1px;
    height: 28px;
    background: #999;
}

/* guest desktop, fixed to the resolution of the virtual screen */
.guest {
    position: relative;
    width: 1195px;
    height: 898px;
    overflow: hidden;
    background: #000;
    font-size: 14px;
    line-height: 20px;
}

.ie {
    display: flex;
    flex-direction: column;
    height: 851px;
    background: #fff;
}

.ie-head {
    display: flex;
    justify-content: space-between;
    height: 64px;
}

.ie-nav {
    display: flex;
    align-self: flex-end;
    align-items: center;
    height: 40px;
    padding-left: 1px;
}

.ie-back {
    width: 42px;
    height: 42px;
    border: 1px solid #4a7a9a;
    border-radius: 50%;
    background: #0f84c4;
}

.ie-back svg {
    width: 25px;
    height: 24px;
}

.ie-forward {
    width: 30px;
    height: 30px;
    margin: 0 4px 0 6px;
    border: 2px solid #bbb;
    border-radius: 50%;
}

.ie-forward svg {
    width: 19px;
    height: 17px;
}

.ie-address {
    display: flex;
    align-items: center;
    width: 509px;
    height: 28px;
    padding: 0 6px 0 5px;
    background: #ffb1c0;
    border: 1px solid #b9a0a6;
    white-space: nowrap;
}

.url {
    width: 326px;
    margin: 0 7px 0 6px;
    color: #85666c;
}

.url b {
    font-weight: 400;
    color: #111;
}

.grey {
    color: #7d5058;
}

.tiny {
    width: 8px;
    height: 5px;
    margin: 0 12px 0 7px;
}

.shield {
    width: 13px;
    height: 16px;
    margin-right: 8px;
}

.cert {
    margin-right: 7px;
}

.reload {
    width: 13px;
    height: 14px;
}

.ie-tab {
    display: flex;
    align-items: center;
    align-self: flex-end;
    width: 234px;
    height: 33px;
    margin-left: 3px;
    padding: 0 7px 1px 6px;
    gap: 4px;
    border: 1px solid #aaa;
    border-bottom: 0;
    font-size: 15px;
}

.ie-tab button {
    margin-left: auto;
}

.ie-tab button svg {
    width: 10px;
    height: 10px;
}

.ie-newtab {
    align-self: flex-end;
    width: 34px;
    height: 33px;
    background: #ddd;
    border: 1px solid #aaa;
    border-left: 0;
    border-bottom: 0;
}

.ie-side {
    display: flex;
    flex-direction: column;
    align-items: flex-end;
}

.ie-controls {
    display: flex;
    height: 33px;
    padding-right: 4px;
    color: #999;
}

.ie-controls button {
    width: 52px;
}

.ie-controls .hovered {
    background: #e2e2e2;
    color: #111;
}

.ie-icons {
    display: flex;
    gap: 8px;
    padding: 2px 9px 0 0;
}

.ie-icons svg {
    width: 20px;
    height: 20px;
}

.ie-page {
    position: relative;
    flex: 1;
    padding: 42px 0 0 63px;
    margin-right: 20px;
    background: linear-gradient(#54799a, #4d7290 35%, #4f7591 50%, #7ea0bd 88%, #7ea0bd);
}

.page-bg {
    position: absolute;
    left: 0;
    top: 0;
    width: 100%;
    height: 100%;
}

.rdweb {
    position: relative;
    height: 100%;
    padding: 0 34px;
    background: #fff;
    box-shadow: 0 0 14px 2px #263b48;
}

.rdweb-head {
    height: 28px;
    margin: 0 -34px;
    background: #7d9db5;
}

.rd-computers {
    width: 64px;
    height: 50px;
    margin-top: 24px;
}

.rdweb h2 {
    margin-top: 44px;
    font-size: 17px;
    line-height: 24px;
    color: #3d6496;
}

.rd-rule {
    height: 8px;
    margin: 14px 0 0 -30px;
    background: linear-gradient(90deg, #fff 8px, #f0982e 60px);
    border-bottom: 4px solid #fdf0dc;
}

.rdweb h3 {
    margin: 24px 0 26px 7px;
    font-size: 15px;
    line-height: 20px;
}

.rd-app {
    display: block;
    font-size: 15px;
}

.rd-app svg {
    width: 32px;
    height: 32px;
    margin: 0 0 5px 10px;
}

.rd-note {
    height: 60px;
    margin: 366px 0 0 20px;
    padding: 2px;
    border: 1px solid #222;
}

.rd-note span {
    display: block;
    width: 10px;
    height: 8px;
    background: #e9b10e;
}

/* Firefox window on the guest desktop */
.firefox {
    position: absolute;
    left: 126px;
    top: 75px;
    width: 1069px;
    height: 804px;
    display: flex;
    flex-direction: column;
    background: #f8f8f8;
    border-left: 1px solid #2a72b5;
}

.ff-tabs {
    display: flex;
    height: 39px;
    padding-left: 46px;
    background: #22203c;
    border-top: 2px solid #0a3f80;
    color: #fff;
}

.ff-tab {
    display: flex;
    align-items: center;
    width: 262px;
    margin-top: -2px;
    padding: 0 14px 2px 10px;
    gap: 8px;
    background: #f8f8f8;
    border-top: 3px solid #157be0;
    color: #111;
}

.ff-tab button {
    margin-left: auto;
}

.ff-plus {
    width: 40px;
}

.ff-plus svg {
    width: 16px;
    height: 16px;
}

.ff-controls {
    display: flex;
    gap: 42px;
    margin-left: auto;
    padding: 0 9px 2px 0;
}

.ff-nav {
    display: flex;
    align-items: center;
    gap: 18px;
    height: 46px;
    padding: 0 4px;
}

.ff-nav button svg {
    width: 19px;
    height: 19px;
}

.ff-nav .ff-back {
    width: 39px;
    height: 39px;
    margin-right: -8px;
    border: 1px solid #ccc;
    border-radius: 50%;
}

.ff-url {
    flex: 1;
    display: flex;
    align-items: center;
    height: 36px;
    margin-left: 29px;
    padding: 0 8px;
    gap: 9px;
    background: #fff;
    border: 1px solid #2c7bb8;
    border-radius: 2px;
}

.ff-url svg {
    width: 19px;
    height: 19px;
}

.ff-url input {
    flex: 1;
    border: 0;
    outline: 0;
    font: 16px "Noto Sans CJK SC", sans-serif;
}

.ff-url input::placeholder {
    color: #777;
}

.ff-actions {
    display: flex;
    align-items: center;
    gap: 18px;
    margin-left: 30px;
}

.ff-actions .ff-menu {
    width: 32px;
    height: 42px;
    margin-left: -4px;
    border-left: 1px solid #ccc;
    justify-content: flex-end;
}

.ff-actions .ff-menu svg {
    width: 14px;
}

.ff-bookmarks {
    display: flex;
    align-items: center;
    height: 35px;
    padding: 0 2px 0 14px;
    gap: 14px;
    border-bottom: 1px solid #ddd;
}

.ff-bookmarks a {
    display: flex;
    align-items: center;
    gap: 5px;
}

.ff-bookmarks svg {
    width: 19px;
    height: 18px;
}

.ff-bookmarks .mobile {
    margin-left: auto;
    gap: 2px;
}

.ff-bookmarks .mobile svg {
    width: 12px;
    height: 20px;
}

.jd {
    width: 19px;
    background: #c01f2e;
    color: #fff;
    text-align: center;
}

.ff-page {
    flex: 1;
}

.ff-notice {
    display: flex;
    align-items: flex-start;
    height: 44px;
    padding: 3px 8px 0 14px;
    background: #efefef;
    border-top: 1px solid #ddd;
}

.help {
    width: 18px;
    height: 18px;
    margin: 9px 15px 0 0;
    border: 2px solid #222;
    border-radius: 50%;
    font-size: 13px;
    line-height: 14px;
    text-align: center;
}

.ff-notice p {
    width: 812px;
    overflow-wrap: anywhere;
}

.choose {
    width: 160px;
    height: 30px;
    margin: 4px 0 0 auto;
    border: 1px solid #aaa;
    background: #e3e3e3;
}

.dismiss {
    margin: 14px 0 0 14px;
}

.guest-taskbar {
    position: absolute;
    left: 0;
    right: 0;
    bottom: 0;
    display: flex;
    height: 47px;
    background: rgba(2, 3, 8, 0.87);
    color: #eee;
}

.guest-taskbar button {
    width: 57px;
}

.guest-taskbar .open {
    width: 47px;
    margin: 0 5px;
    border-top: 3px solid transparent;
    border-bottom: 3px solid #78b4e0;
}

.guest-taskbar .current {
    width: 57px;
    margin: 0;
    background: #555;
}

.guest-tray {
    display: flex;
    align-items: center;
    gap: 9px;
    margin-left: auto;
    padding-right: 4px;
}

.guest-tray .chev {
    width: 15px;
    height: 9px;
    margin-right: 2px;
}

.guest-tray .ime {
    width: 16px;
    font-size: 16px;
}

.guest-tray time {
    width: 74px;
    line-height: 23px;
    text-align: center;
}

.guest-tray .ico28 {
    margin-left: 9px;
}

.badge-count {
    font-size: 14px;
    fill: #fff;
}

.guest-tray .peek {
    width: 1px;
    height: 46px;
    margin-left: 8px;
    background: #777;
}

.pointer {
    position: absolute;
    width: 14px;
    height: 24px;
}

.guest-pointer {
    left: 595px;
    top: 98px;
}

.host-pointer {
    left: 301px;
    top: 1148px;
}

/* host taskbar */
.taskbar {
    display: flex;
    height: 59px;
    background: linear-gradient(90deg, #d0e8ee, #d3e8f0 50%, #d6dfee 80%);
    color: #111;
}

.taskbar > button {
    width: 60px;
    margin: 0 6px;
    border-bottom: 4px solid transparent;
    border-top: 2px solid transparent;
}

.taskbar > button:first-child {
    margin-left: 5px;
}

.taskbar > button:nth-child(-n+2) {
    margin-right: 4px;
}

.taskbar > .task-view {
    margin-right: 8px;
}

.taskbar > .open {
    border-bottom-color: #0a72cc;
}

.taskbar > .current {
    width: 67px;
    margin: 0 3px;
    background: #edf4f9;
}

.tray {
    display: flex;
    align-items: center;
    gap: 11px;
    margin-left: auto;
    padding-right: 4px;
}

.tray svg {
    width: 24px;
    height: 24px;
}

.tray .chev {
    width: 20px;
    height: 12px;
    margin-right: 3px;
}

.tray .ime {
    width: 24px;
    margin-right: 6px;
    font-size: 22px;
    color: #777;
}

.tray time {
    width: 100px;
    margin-left: 8px;
    line-height: 27px;
    text-align: center;
}

.tray time + svg {
    margin-left: 11px;
}

.peek {
    width: 1px;
    height: 59px;
    margin-left: 18px;
    background: #aab4c2;
}

/* overlays */
.watermark {
    position: absolute;
    top: 112px;
    right: 38px;
    display: flex;
    align-items: flex-end;
    gap: 20px;
    color: rgba(255, 255, 255, 0.8);
    font: 500 44px/58px "Noto Sans CJK SC", sans-serif;
    text-shadow: 0 0 1px rgba(120, 120, 120, 0.25);
}

.watermark svg {
    width: 166px;
    height: 74px;
}

.lyrics {
    position: absolute;
    right: 26px;
    top: 637px;
    display: flex;
    gap: 16px;
    writing-mode: vertical-rl;
    font: 400 55px/54px "Open Sans", "Noto Sans CJK SC", sans-serif;
    color: transparent;
}

.line-a {
    background: linear-gradient(#e6e3ea, #74bbe4 45%, #4a96e0 90%);
    background-clip: text;
}

.line-b {
    background: linear-gradient(#0d55a8, #3a85d8 45%, #5fb0ea 75%, #d5e6f0);
    background-clip: text;
}

.ime-bar {
    position: absolute;
    right: 8px;
    bottom: 149px;
    display: flex;
    align-items: center;
    justify-content: space-between;
    width: 146px;
    height: 43px;
    padding: 0 12px 0 10px;
    background: #fff;
    border: 2px solid #3a82c4;
    color: #1673d1;
    font-size: 22px;
}

.ime-bar svg {
    width: 22px;
    height: 22px;
}
```
